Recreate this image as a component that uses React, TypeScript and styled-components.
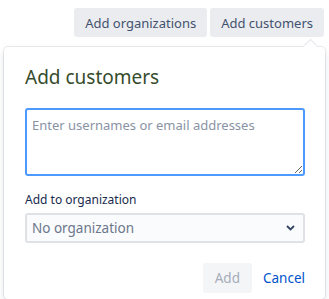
import React from 'react';
import styled, {createGlobalStyle} from 'styled-components';

const GlobalStyle = createGlobalStyle`
  html, body {
    margin: 0;
    padding: 0;
    background: #ffffff;
  }
  body {
    font-family: 'Noto Sans', 'Liberation Sans', sans-serif;
    color: #172b4d;
    width: 329px;
    height: 299px;
    overflow: hidden;
  }
`;

const Page = styled.div`
  display: flex;
  flex-direction: column;
  width: 329px;
  height: 299px;
`;

const Toolbar = styled.div`
  display: flex;
  justify-content: flex-end;
  gap: 3px;
  padding: 8px 5px 0 0;
`;

const ToolbarButton = styled.button`
  height: 29px;
  padding: 0 11px;
  border: none;
  border-radius: 3px;
  background: #ebecf0;
  color: #42526e;
  font-family: inherit;
  font-size: 13px;
  cursor: pointer;
`;

const Popup = styled.div`
  position: relative;
  margin: 10px 4px 0 4px;
  padding: 16px 20px 0 21px;
  background: #ffffff;
  border-radius: 4px;
  box-shadow: 0 0 0 1px rgba(9, 30, 66, 0.08), 0 3px 8px -2px rgba(9, 30, 66, 0.22);
  flex: 1;

  &::before {
    content: '';
    position: absolute;
    top: -5px;
    right: 10px;
    width: 9px;
    height: 9px;
    background: #ffffff;
    transform: rotate(45deg);
    box-shadow: -1px -1px 0 0 rgba(9, 30, 66, 0.1);
  }
`;

const Title = styled.h2`
  margin: 0 0 17px 0;
  font-size: 19px;
  font-weight: 400;
  line-height: 28px;
  color: #364c2c;
`;

const TextArea = styled.textarea`
  display: block;
  box-sizing: border-box;
  width: 280px;
  height: 68px;
  margin: 0;
  padding: 6px 5px;
  border: 2px solid #4c9aff;
  border-radius: 3px;
  background: #ffffff;
  font-family: inherit;
  font-size: 13px;
  line-height: 18px;
  color: #172b4d;
  outline: none;
  resize: vertical;

  &::placeholder {
    color: #8993a4;
  }
`;

const Label = styled.label`
  display: block;
  margin: 16px 0 5px 0;
  font-size: 12px;
  font-weight: 400;
  line-height: 16px;
  color: #172b4d;
`;

const SelectWrap = styled.div`
  position: relative;
  width: 280px;
`;

const Select = styled.select`
  display: block;
  box-sizing: border-box;
  width: 100%;
  height: 30px;
  padding: 0 24px 0 5px;
  border: 2px solid #dfe1e6;
  border-radius: 3px;
  background: #fafbfc;
  font-family: inherit;
  font-size: 13.5px;
  color: #6b778c;
  appearance: none;
  outline: none;
`;

const Chevron = styled.svg`
  position: absolute;
  right: 10px;
  top: 12px;
  pointer-events: none;
`;

const Actions = styled.div`
  display: flex;
  justify-content: flex-end;
  align-items: center;
  gap: 3px;
  margin-top: 20px;
  width: 280px;
`;

const PrimaryButton = styled.button`
  height: 30px;
  padding: 0 12px;
  border: none;
  border-radius: 3px;
  background: #f4f5f7;
  color: #a5adba;
  font-family: inherit;
  font-size: 13.5px;
  cursor: not-allowed;
`;

const LinkButton = styled.button`
  height: 30px;
  padding: 0 0 0 8px;
  border: none;
  background: transparent;
  color: #0052cc;
  font-family: inherit;
  font-size: 13.5px;
  cursor: pointer;
`;

export default function App() {
  return (
    <>
      <GlobalStyle />
      <Page>
        <Toolbar>
          <ToolbarButton>Add organizations</ToolbarButton>
          <ToolbarButton>Add customers</ToolbarButton>
        </Toolbar>
        <Popup>
          <Title>Add customers</Title>
          <TextArea placeholder='Enter usernames or email addresses' />
          <Label htmlFor='org'>Add to organization</Label>
          <SelectWrap>
            <Select id='org' defaultValue='none'>
              <option value='none'>No organization</option>
            </Select>
            <Chevron width='9' height='6' viewBox='0 0 9 6'>
              <path d='M1 1l3.5 3.5L8 1' fill='none' stroke='#344563' strokeWidth='1.8' />
            </Chevron>
          </SelectWrap>
          <Actions>
            <PrimaryButton disabled>Add</PrimaryButton>
            <LinkButton>Cancel</LinkButton>
          </Actions>
        </Popup>
      </Page>
    </>
  );
}
